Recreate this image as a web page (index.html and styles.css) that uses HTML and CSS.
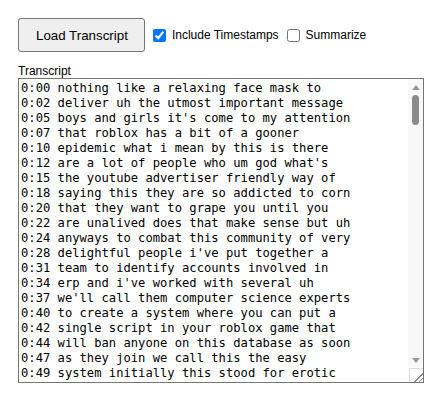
FILE: index.html
```html
<!DOCTYPE html>
<html>
<head>
<meta charset="utf-8">
<link rel="stylesheet" href="styles.css">
</head>
<body>
<div class="app">
  <div class="controls">
    <button class="load-btn">Load Transcript</button>
    <label class="check"><input type="checkbox" checked>Include Timestamps</label>
    <label class="check"><input type="checkbox">Summarize</label>
  </div>
  <div class="field">
    <label class="field-label" for="t">Transcript</label>
    <div class="ta-wrap">
    <textarea id="t" class="transcript" spellcheck="false">0:00 nothing like a relaxing face mask to
0:02 deliver uh the utmost important message
0:05 boys and girls it's come to my attention
0:07 that roblox has a bit of a gooner
0:10 epidemic what i mean by this is there
0:12 are a lot of people who um god what's
0:15 the youtube advertiser friendly way of
0:18 saying this they are so addicted to corn
0:20 that they want to grape you until you
0:22 are unalived does that make sense but uh
0:24 anyways to combat this community of very
0:28 delightful people i've put together a
0:31 team to identify accounts involved in
0:34 erp and i've worked with several uh
0:37 we'll call them computer science experts
0:40 to create a system where you can put a
0:42 single script in your roblox game that
0:44 will ban anyone on this database as soon
0:47 as they join we call this the easy
0:49 system initially this stood for erotic
0:52
0:54
0:57
0:59
1:02
1:04
1:07
1:09
1:12
1:14
1:17
1:19
1:22
1:24
1:27
1:29
1:32
1:34
1:37
1:39
1:42
1:44
1:47
1:49
1:52
1:54
1:57
1:59
2:02
2:04
2:07
2:09
2:12
2:14
2:17
2:19
2:22
2:24
2:27
2:29
2:32
2:34
2:37
2:39
2:42
2:44
2:47
2:49
2:52
2:54
2:57
2:59
3:02
3:04
3:07
3:09
3:12
3:14
3:17
3:19
3:22
3:24
3:27
3:29
3:32
3:34
3:37
3:39
3:42
3:44
3:47
3:49
3:52
3:54
3:57
3:59
4:02
4:04
4:07
4:09
4:12
4:14
4:17
4:19
4:22
4:24
4:27
4:29
4:32
4:34
4:37
4:39
4:42
4:44
4:47
4:49</textarea>
    <div class="vscroll" aria-hidden="true">
      <div class="arrow arrow-up"></div>
      <div class="track"><div class="thumb"></div></div>
      <div class="arrow arrow-down"></div>
    </div>
    </div>
  </div>
</div>
</body>
</html>
```

FILE: styles.css
```css
html, body {
  margin: 0;
  padding: 0;
  background: #ffffff;
}

.app {
  padding: 18px 10px 10px 18px;
  font-family: "Liberation Sans", Arial, sans-serif;
  color: #000;
}

.controls {
  display: flex;
  align-items: center;
  height: 34px;
}

.load-btn {
  font-family: "Liberation Sans", Arial, sans-serif;
  font-size: 13.33px;
  height: 34px;
  padding: 0 16px 0 17px;
  background: #efefef;
  border: 1px solid #767676;
  border-radius: 3px;
  color: #000;
  margin: 0 4px 0 0;
}

.check {
  display: flex;
  align-items: center;
  font-size: 12px;
  margin-right: 4px;
}

.check input {
  width: 13px;
  height: 13px;
  margin: 0 6px 0 4px;
  accent-color: #0075ff;
}

.field {
  display: flex;
  flex-direction: column;
  margin-top: 12px;
}

.field-label {
  font-size: 12px;
  line-height: 14px;
}

.ta-wrap {
  position: relative;
  width: 406px;
  height: 305px;
}

.transcript {
  display: block;
  box-sizing: border-box;
  width: 406px;
  height: 305px;
  margin: 0;
  padding: 2px 17px 2px 2px;
  border: 1px solid #767676;
  border-radius: 0;
  font-family: "DejaVu Sans Mono", "Liberation Mono", monospace;
  font-size: 12.17px;
  line-height: 15px;
  color: #000;
  resize: both;
  white-space: pre;
  overflow: hidden;
}

.transcript::-webkit-resizer {
  background-color: #ffffff;
}

/* decorative scrollbar overlay (headless hides native scrollbars) */
.vscroll {
  position: absolute;
  top: 1px;
  right: 1px;
  bottom: 16px;
  width: 15px;
  display: flex;
  flex-direction: column;
  background: #f8f8f8;
  pointer-events: none;
}

.arrow {
  height: 15px;
  flex: none;
  display: flex;
  align-items: center;
  justify-content: center;
}

.arrow::before {
  content: "";
  width: 0;
  height: 0;
  border-left: 4px solid transparent;
  border-right: 4px solid transparent;
}

.arrow-up::before {
  border-bottom: 5px solid #9a9a9a;
  margin-top: 1px;
}

.arrow-down::before {
  border-top: 5px solid #9a9a9a;
  margin-top: 1px;
}

.track {
  flex: 1;
  display: flex;
  justify-content: center;
  padding-top: 1px;
}

.thumb {
  width: 7px;
  height: 30px;
  border-radius: 4px;
  background: #8b8b8b;
}

.ta-wrap::after {
  content: "";
  position: absolute;
  right: 1px;
  bottom: 1px;
  width: 14px;
  height: 14px;
  border-top: 1px solid #dedede;
  border-left: 1px solid #dedede;
  box-sizing: border-box;
  pointer-events: none;
  background:
    linear-gradient(135deg, transparent 0 64%, #8a8a8a 64% 70%, transparent 70% 82%, #8a8a8a 82% 88%, transparent 88%);
}
```
